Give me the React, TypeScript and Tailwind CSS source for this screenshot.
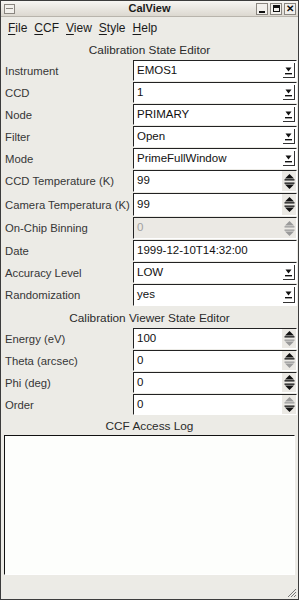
import React from "react";

const font = { fontFamily: '"Liberation Sans", Arial, Helvetica, sans-serif' };

function DownArrow() {
  return (
    <svg width="7" height="9" viewBox="0 0 7 9">
      <path d="M0.5 1.5 L6.5 1.5 L3.5 5.5 Z" fill="#111" />
      <rect x="0" y="7" width="7" height="1.4" fill="#111" />
    </svg>
  );
}

function Combo({ value }: { value: string }) {
  return (
    <div className="flex h-full flex-1 items-stretch border border-t-[#222] border-l-[#222] border-b-[#fff] border-r-[#fff] bg-white">
      <div className="flex flex-1 items-center pl-[3px] text-[11.5px] text-[#111]">{value}</div>
      <div className="my-[2px] mr-[1px] flex w-[12px] items-center justify-center border-r border-b border-r-[#333] border-b-[#333]">
        <DownArrow />
      </div>
    </div>
  );
}

function Tri({ up, on }: { up: boolean; on: boolean }) {
  const c = on ? "#111" : "#9a9a9a";
  return (
    <svg width="11" height="8" viewBox="0 0 11 8">
      {up ? (
        <>
          <path d="M1 5.5 L5.5 1 L10 5.5 Z" fill={c} />
          <rect x="0.5" y="6.2" width="10" height="1.3" fill={c} />
        </>
      ) : (
        <>
          <rect x="0.5" y="0.5" width="10" height="1.3" fill={c} />
          <path d="M1 2.5 L10 2.5 L5.5 7 Z" fill={c} />
        </>
      )}
    </svg>
  );
}

function Spin({ value, up, down, disabled }: { value: string; up: boolean; down: boolean; disabled?: boolean }) {
  return (
    <div
      className={`flex h-full flex-1 items-stretch border border-t-[#222] border-l-[#222] border-b-[#fff] border-r-[#fff] ${
        disabled ? "bg-[#ebe9e4]" : "bg-white"
      }`}
    >
      <div className={`flex flex-1 items-center pl-[3px] text-[11.5px] ${disabled ? "text-[#a0a0a0]" : "text-[#111]"}`}>
        {value}
      </div>
      <div className="flex w-[14px] flex-col items-center justify-center gap-[1px] bg-[#ebe9e4]">
        <Tri up on={up} />
        <Tri up={false} on={down} />
      </div>
    </div>
  );
}

function Text({ value }: { value: string }) {
  return (
    <div className="flex h-full flex-1 items-center border border-t-[#222] border-l-[#222] border-b-[#fff] border-r-[#fff] bg-white pl-[3px] text-[11.5px] text-[#111]">
      {value}
    </div>
  );
}

function Row({ label, h = "h-[22px]", children }: { label: string; h?: string; children: React.ReactNode }) {
  return (
    <div className={`flex ${h} items-center`}>
      <div className="w-[132px] shrink-0 pl-[4px] text-[11.3px] text-[#363636] whitespace-nowrap">{label}</div>
      <div className="flex h-full flex-1 pb-[1px]">{children}</div>
    </div>
  );
}

function Heading({ text, h }: { text: string; h: string }) {
  return <div className={`flex ${h} items-center justify-center pt-[3px] text-[11.8px] text-[#2a2a2a]`}>{text}</div>;
}

function Menu({ first, rest }: { first: string; rest: string }) {
  return (
    <span>
      <span className="underline underline-offset-2">{first}</span>
      {rest}
    </span>
  );
}

function WinBtn({ children }: { children: React.ReactNode }) {
  return (
    <div className="flex h-[12px] w-[12px] items-center justify-center border border-[#8a8680] bg-[#f2f0ec]">
      {children}
    </div>
  );
}

export default function App() {
  return (
    <div style={font} className="flex h-[600px] w-[299px] flex-col border border-[#3c3c3c] bg-[#ecebe6]">
      <div className="relative flex h-[16px] items-center border-b border-[#b8b4ac] bg-gradient-to-b from-[#f7f6f3] to-[#dcd8d0]">
        <div className="ml-[3px] h-[10px] w-[11px] border border-[#8a8680] bg-[#f2f0ec]">
          <div className="mx-[1px] mt-[3px] h-[1px] bg-[#8a8680]" />
        </div>
        <div className="absolute inset-0 flex items-center justify-center text-[11px] font-bold text-[#1a1a1a]">CalView</div>
        <div className="ml-auto mr-[2px] flex gap-[2px]">
          <WinBtn>
            <div className="mt-[6px] h-[2px] w-[6px] bg-[#111]" />
          </WinBtn>
          <WinBtn>
            <div className="h-[7px] w-[7px] border border-t-[3px] border-[#111]" />
          </WinBtn>
          <WinBtn>
            <span className="text-[10px] leading-none font-bold text-[#111]">✕</span>
          </WinBtn>
        </div>
      </div>
      <div className="flex h-[21px] items-center gap-[7px] pl-[7px] pt-[1px] text-[12px] text-[#1a1a1a]">
        <Menu first="F" rest="ile" />
        <Menu first="C" rest="CF" />
        <Menu first="V" rest="iew" />
        <Menu first="S" rest="tyle" />
        <Menu first="H" rest="elp" />
      </div>
      <Heading text="Calibration State Editor" h="h-[22px]" />
      <div className="flex flex-col pr-[1px]">
        <Row label="Instrument"><Combo value="EMOS1" /></Row>
        <Row label="CCD"><Combo value="1" /></Row>
        <Row label="Node"><Combo value="PRIMARY" /></Row>
        <Row label="Filter"><Combo value="Open" /></Row>
        <Row label="Mode"><Combo value="PrimeFullWindow" /></Row>
        <Row label="CCD Temperature (K)" h="h-[23px]"><Spin value="99" up down /></Row>
        <Row label="Camera Temperatura (K)" h="h-[24px]"><Spin value="99" up down /></Row>
        <Row label="On-Chip Binning" h="h-[23px]"><Spin value="0" up={false} down={false} disabled /></Row>
        <Row label="Date"><Text value="1999-12-10T14:32:00" /></Row>
        <Row label="Accuracy Level"><Combo value="LOW" /></Row>
        <Row label="Randomization" h="h-[23px]"><Combo value="yes" /></Row>
      </div>
      <Heading text="Calibration Viewer State Editor" h="h-[21px]" />
      <div className="flex flex-col pr-[1px]">
        <Row label="Energy (eV)"><Spin value="100" up down={false} /></Row>
        <Row label="Theta (arcsec)"><Spin value="0" up down={false} /></Row>
        <Row label="Phi (deg)"><Spin value="0" up down /></Row>
        <Row label="Order"><Spin value="0" up={false} down /></Row>
      </div>
      <Heading text="CCF Access Log" h="h-[19px]" />
      <div className="mx-[3px] h-[140px] border border-t-[#111] border-l-[#111] border-b-[#fff] border-r-[#fff] bg-[#fdfefc]" />
      <div className="relative flex-1">
        <svg className="absolute right-[1px] bottom-[1px]" width="10" height="10" viewBox="0 0 10 10">
          <path d="M9 1 L1 9 M9 4 L4 9 M9 7 L7 9" stroke="#777" strokeWidth="1" />
        </svg>
      </div>
    </div>
  );
}
